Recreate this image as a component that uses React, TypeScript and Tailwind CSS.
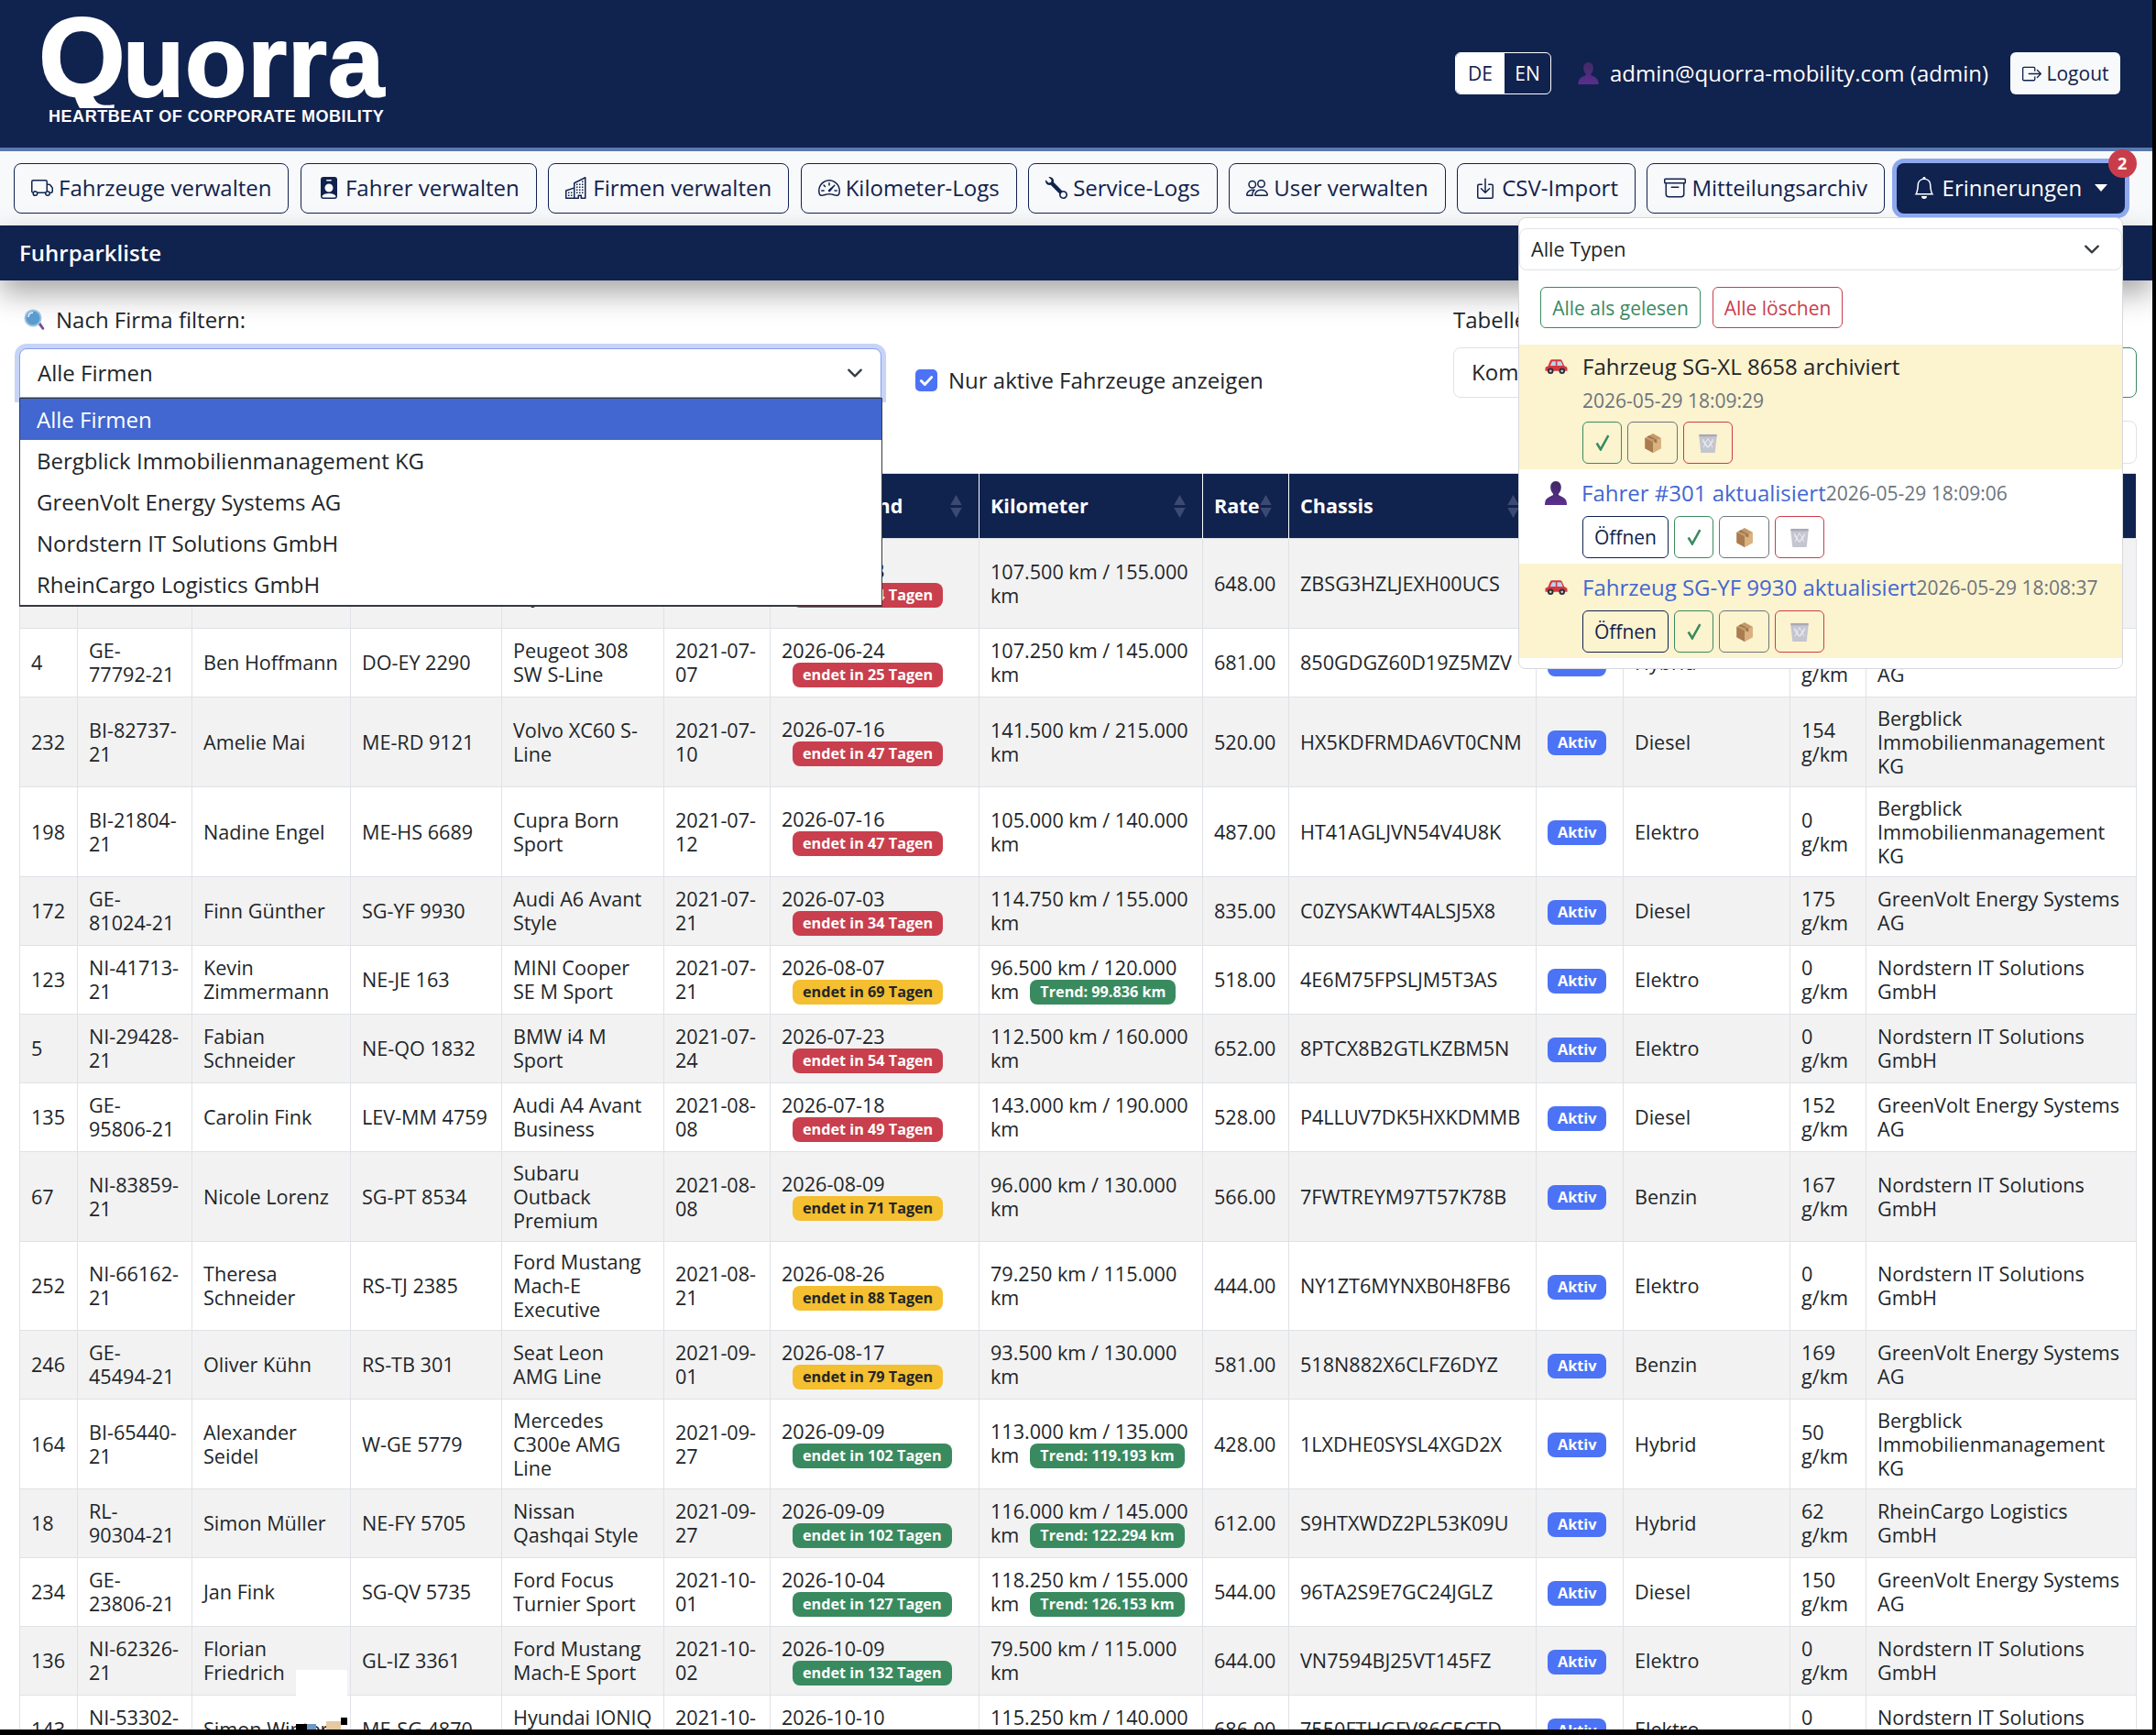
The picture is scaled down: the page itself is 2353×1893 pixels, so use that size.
import React from "react";
import {
  BsTruck,
  BsPersonBadgeFill,
  BsBuildings,
  BsSpeedometer2,
  BsWrench,
  BsPeople,
  BsBoxArrowInDown,
  BsArchive,
  BsBell,
  BsBoxArrowRight,
} from "react-icons/bs";

type Vehicle = {
  id: string;
  contract: string;
  driver: string;
  plate: string;
  model: string;
  start: string;
  end: string;
  days: number;
  km: string;
  trend?: string;
  rate: string;
  chassis: string;
  fuel: string;
  co2: string;
  company: string;
  h: string;
};

const BERG = "Bergblick Immobilienmanagement KG";
const GREEN = "GreenVolt Energy Systems AG";
const NORD = "Nordstern IT Solutions GmbH";
const RHEIN = "RheinCargo Logistics GmbH";

const vehicles: Vehicle[] = [
  { id: "61", contract: "BI-11802-21", driver: "Lena Vogel", plate: "ME-KA 4410", model: "Skoda Superb Style", start: "2021-07-03", end: "2026-06-23", days: 24, km: "107.500 km / 155.000 km", rate: "648.00", chassis: "ZBSG3HZLJEXH00UCS", fuel: "Diesel", co2: "160", company: BERG, h: "h-[98px]" },
  { id: "4", contract: "GE-77792-21", driver: "Ben Hoffmann", plate: "DO-EY 2290", model: "Peugeot 308 SW S-Line", start: "2021-07-07", end: "2026-06-24", days: 25, km: "107.250 km / 145.000 km", rate: "681.00", chassis: "850GDGZ60D19Z5MZV", fuel: "Hybrid", co2: "48", company: GREEN, h: "h-[75px]" },
  { id: "232", contract: "BI-82737-21", driver: "Amelie Mai", plate: "ME-RD 9121", model: "Volvo XC60 S-Line", start: "2021-07-10", end: "2026-07-16", days: 47, km: "141.500 km / 215.000 km", rate: "520.00", chassis: "HX5KDFRMDA6VT0CNM", fuel: "Diesel", co2: "154", company: BERG, h: "h-[98px]" },
  { id: "198", contract: "BI-21804-21", driver: "Nadine Engel", plate: "ME-HS 6689", model: "Cupra Born Sport", start: "2021-07-12", end: "2026-07-16", days: 47, km: "105.000 km / 140.000 km", rate: "487.00", chassis: "HT41AGLJVN54V4U8K", fuel: "Elektro", co2: "0", company: BERG, h: "h-[98px]" },
  { id: "172", contract: "GE-81024-21", driver: "Finn Günther", plate: "SG-YF 9930", model: "Audi A6 Avant Style", start: "2021-07-21", end: "2026-07-03", days: 34, km: "114.750 km / 155.000 km", rate: "835.00", chassis: "C0ZYSAKWT4ALSJ5X8", fuel: "Diesel", co2: "175", company: GREEN, h: "h-[75px]" },
  { id: "123", contract: "NI-41713-21", driver: "Kevin Zimmermann", plate: "NE-JE 163", model: "MINI Cooper SE M Sport", start: "2021-07-21", end: "2026-08-07", days: 69, km: "96.500 km / 120.000 km", trend: "99.836", rate: "518.00", chassis: "4E6M75FPSLJM5T3AS", fuel: "Elektro", co2: "0", company: NORD, h: "h-[75px]" },
  { id: "5", contract: "NI-29428-21", driver: "Fabian Schneider", plate: "NE-QO 1832", model: "BMW i4 M Sport", start: "2021-07-24", end: "2026-07-23", days: 54, km: "112.500 km / 160.000 km", rate: "652.00", chassis: "8PTCX8B2GTLKZBM5N", fuel: "Elektro", co2: "0", company: NORD, h: "h-[75px]" },
  { id: "135", contract: "GE-95806-21", driver: "Carolin Fink", plate: "LEV-MM 4759", model: "Audi A4 Avant Business", start: "2021-08-08", end: "2026-07-18", days: 49, km: "143.000 km / 190.000 km", rate: "528.00", chassis: "P4LLUV7DK5HXKDMMB", fuel: "Diesel", co2: "152", company: GREEN, h: "h-[75px]" },
  { id: "67", contract: "NI-83859-21", driver: "Nicole Lorenz", plate: "SG-PT 8534", model: "Subaru Outback Premium", start: "2021-08-08", end: "2026-08-09", days: 71, km: "96.000 km / 130.000 km", rate: "566.00", chassis: "7FWTREYM97T57K78B", fuel: "Benzin", co2: "167", company: NORD, h: "h-[98px]" },
  { id: "252", contract: "NI-66162-21", driver: "Theresa Schneider", plate: "RS-TJ 2385", model: "Ford Mustang Mach-E Executive", start: "2021-08-21", end: "2026-08-26", days: 88, km: "79.250 km / 115.000 km", rate: "444.00", chassis: "NY1ZT6MYNXB0H8FB6", fuel: "Elektro", co2: "0", company: NORD, h: "h-[97px]" },
  { id: "246", contract: "GE-45494-21", driver: "Oliver Kühn", plate: "RS-TB 301", model: "Seat Leon AMG Line", start: "2021-09-01", end: "2026-08-17", days: 79, km: "93.500 km / 130.000 km", rate: "581.00", chassis: "518N882X6CLFZ6DYZ", fuel: "Benzin", co2: "169", company: GREEN, h: "h-[75px]" },
  { id: "164", contract: "BI-65440-21", driver: "Alexander Seidel", plate: "W-GE 5779", model: "Mercedes C300e AMG Line", start: "2021-09-27", end: "2026-09-09", days: 102, km: "113.000 km / 135.000 km", trend: "119.193", rate: "428.00", chassis: "1LXDHE0SYSL4XGD2X", fuel: "Hybrid", co2: "50", company: BERG, h: "h-[98px]" },
  { id: "18", contract: "RL-\n90304-21", driver: "Simon Müller", plate: "NE-FY 5705", model: "Nissan Qashqai Style", start: "2021-09-27", end: "2026-09-09", days: 102, km: "116.000 km / 145.000 km", trend: "122.294", rate: "612.00", chassis: "S9HTXWDZ2PL53K09U", fuel: "Hybrid", co2: "62", company: RHEIN, h: "h-[75px]" },
  { id: "234", contract: "GE-23806-21", driver: "Jan Fink", plate: "SG-QV 5735", model: "Ford Focus Turnier Sport", start: "2021-10-01", end: "2026-10-04", days: 127, km: "118.250 km / 155.000 km", trend: "126.153", rate: "544.00", chassis: "96TA2S9E7GC24JGLZ", fuel: "Diesel", co2: "150", company: GREEN, h: "h-[75px]" },
  { id: "136", contract: "NI-62326-21", driver: "Florian Friedrich", plate: "GL-IZ 3361", model: "Ford Mustang Mach-E Sport", start: "2021-10-02", end: "2026-10-09", days: 132, km: "79.500 km / 115.000 km", rate: "644.00", chassis: "VN7594BJ25VT145FZ", fuel: "Elektro", co2: "0", company: NORD, h: "h-[75px]" },
  { id: "143", contract: "NI-53302-21", driver: "Simon Winter", plate: "ME-SG 4870", model: "Hyundai IONIQ 5", start: "2021-10-03", end: "2026-10-10", days: 133, km: "115.250 km / 140.000 km", rate: "686.00", chassis: "7550FTHGFV86C5CTD", fuel: "Elektro", co2: "0", company: NORD, h: "h-[75px]" },
];

const headers = ["ID", "Vertrag", "Fahrer", "Kennzeichen", "Modell", "Start", "Vertragsend", "Kilometer", "Rate", "Chassis", "Status", "Antrieb", "CO2", "Firma"];

const navItems = [
  { label: "Fahrzeuge verwalten", icon: BsTruck },
  { label: "Fahrer verwalten", icon: BsPersonBadgeFill },
  { label: "Firmen verwalten", icon: BsBuildings },
  { label: "Kilometer-Logs", icon: BsSpeedometer2 },
  { label: "Service-Logs", icon: BsWrench },
  { label: "User verwalten", icon: BsPeople },
  { label: "CSV-Import", icon: BsBoxArrowInDown },
  { label: "Mitteilungsarchiv", icon: BsArchive },
];

function CarEmoji() {
  return (
    <svg viewBox="0 0 26 18" className="h-[18px] w-[25px] shrink-0">
      <path d="M1 9.500 3.500 8.500 6 2.500C6.500 1.500 7.500 1 8.500 1h8.500c1.200 0 2 .5 2.600 1.500L22 8l2.800 1.500c.5.5.7 1 .7 2V14H.5v-2.500C.5 10.500.6 10 1 9.500Z" fill="#d8363f" />
      <path d="M8.300 3h4v5H6ZM14 3h3.600c.6 0 1 .3 1.200.8L20.400 8H14Z" fill="#b5d6ec" />
      <circle cx="6.500" cy="14" r="3.400" fill="#2c2f36" />
      <circle cx="19.500" cy="14" r="3.400" fill="#2c2f36" />
      <circle cx="6.500" cy="14" r="1.400" fill="#c9ced6" />
      <circle cx="19.500" cy="14" r="1.400" fill="#c9ced6" />
    </svg>
  );
}

function BustEmoji({ className }: { className: string }) {
  return (
    <svg viewBox="0 0 24 26" className={className}>
      <defs>
        <linearGradient id="bust" x1="0" y1="0" x2="0" y2="1">
          <stop offset="0" stopColor="#3f2a63" />
          <stop offset="1" stopColor="#5a2f8f" />
        </linearGradient>
      </defs>
      <path d="M12 0c3.800 0 5.800 3 5.800 6.400 0 2.800-1 5.400-2.600 7-.6.7-.4 1.600.4 2 3.400 1.600 6.800 3 7.800 6.200.5 1.700.6 3 .6 4.400H0c0-1.400.1-2.700.6-4.400 1-3.200 4.400-4.600 7.800-6.200.8-.4 1-1.300.4-2-1.600-1.600-2.600-4.200-2.600-7C6.200 3 8.200 0 12 0Z" fill="url(#bust)" />
    </svg>
  );
}

function BoxEmoji() {
  return (
    <svg viewBox="0 0 20 24" className="h-[23px] w-[20px]">
      <path d="M10 1 19 6v12l-9 5-9-5V6Z" fill="#c49a6c" />
      <path d="M10 11 19 6v12l-9 5Z" fill="#d9b27f" />
      <path d="M10 11 1 6v12l9 5Z" fill="#a97c50" />
      <path d="M5.500 3.500 14.500 8.500v3.500l-3-1V7.800L3 5Z" fill="#8a6139" opacity="0.7" />
    </svg>
  );
}

function TrashEmoji() {
  return (
    <svg viewBox="0 0 22 24" className="h-[23px] w-[22px]">
      <path d="M1 2h20v3l-2 18H3L1 5Z" fill="#c3c5cf" />
      <path d="M1 2h20v2.500H1Z" fill="#a7a9b6" />
      <path d="M5 7l3 5-2 5M11 7l-3 5 3 5 3-5ZM17 7l-3 5 2 5M4.500 9l6 8M17.500 9l-6 8" fill="none" stroke="#ececf2" strokeWidth="1" />
    </svg>
  );
}

function MagnifierEmoji() {
  return (
    <svg viewBox="0 0 24 24" className="h-[24px] w-[24px] shrink-0">
      <path d="M15.500 16.500 20 22.500c.8.900 2.800-.4 2.200-1.500l-4-6Z" fill="#7a4b8f" />
      <circle cx="10" cy="10" r="9.500" fill="#9cc2e0" />
      <circle cx="10" cy="10" r="7.500" fill="#5a9bd0" />
      <path d="M5 9c0-3 2-5 5-5" fill="none" stroke="#cfe6f7" strokeWidth="2" />
    </svg>
  );
}

function Chevron() {
  return (
    <svg viewBox="0 0 16 16" className="h-[18px] w-[18px]">
      <path d="M2 5l6 6 6-6" fill="none" stroke="#343a40" strokeWidth="2" strokeLinecap="round" strokeLinejoin="round" />
    </svg>
  );
}

function SortArrows() {
  return (
    <svg viewBox="0 0 12 24" className="mr-[6px] h-[25px] w-[13px] shrink-0">
      <path d="M6 0 12 10.500H0ZM6 24 0 13.500H12Z" fill="#3c4a73" />
    </svg>
  );
}

function NoticeButtons({ open }: { open?: boolean }) {
  return (
    <div className="flex gap-[6px]">
      {open && (
        <button className="h-[46px] w-[94px] rounded-[6px] border border-[#10224e] text-[21px] text-[#10224e]">Öffnen</button>
      )}
      <button className="flex h-[46px] w-[43px] items-center justify-center rounded-[6px] border border-[#3a8a5f]">
        <svg viewBox="0 0 15 17" className="h-[18px] w-[16px]">
          <path d="M1.500 9 5.500 15.500 13.500 1" fill="none" stroke="#3a8a5f" strokeWidth="2.400" />
        </svg>
      </button>
      <button className="flex h-[46px] w-[55px] items-center justify-center rounded-[6px] border border-[#6c757d]"><BoxEmoji /></button>
      <button className="flex h-[46px] w-[54px] items-center justify-center rounded-[6px] border border-[#c93d4b]"><TrashEmoji /></button>
    </div>
  );
}

function VehicleRow({ v, odd }: { v: Vehicle; odd: boolean }) {
  const badge = v.days < 60 ? "bg-[#c93f4d] text-white" : v.days < 100 ? "bg-[#f4bf30] text-[#212529]" : "bg-[#3a8a5f] text-white";
  const cell = "border border-[#dee2e6] px-3 align-middle";
  return (
    <tr className={`${v.h} ${odd ? "bg-[#f2f2f2]" : "bg-white"}`}>
      <td className={cell}>{v.id}</td>
      <td className={`${cell} whitespace-pre-line`}>{v.contract}</td>
      <td className={cell}>{v.driver}</td>
      <td className={cell}>{v.plate}</td>
      <td className={cell}>{v.model}</td>
      <td className={cell}>{v.start}</td>
      <td className={cell}>
        <div>{v.end}</div>
        <span className={`ml-3 inline-block h-[27px] rounded-[8px] px-[11px] align-top text-[16.200px] font-bold leading-[27px] ${badge}`}>endet in {v.days} Tagen</span>
      </td>
      <td className={cell}>
        {v.km}
        {v.trend && (
          <span className="ml-3 inline-block h-[27px] rounded-[8px] bg-[#3a8a5f] px-[11px] align-top text-[16.200px] font-bold leading-[27px] text-white">Trend: {v.trend} km</span>
        )}
      </td>
      <td className={cell}>{v.rate}</td>
      <td className={cell}>{v.chassis}</td>
      <td className={cell}>
        <span className="inline-block h-[27px] rounded-[8px] bg-[#4c73f5] px-[11px] text-[16.200px] font-bold leading-[27px] text-white">Aktiv</span>
      </td>
      <td className={cell}>{v.fuel}</td>
      <td className={cell}>{v.co2} g/km</td>
      <td className={cell}>{v.company}</td>
    </tr>
  );
}

export default function App() {
  return (
    <div className="relative h-[1893px] w-[2353px] overflow-hidden bg-black font-['Open_Sans',sans-serif] text-[21.600px] leading-[26px] text-[#212529]">
      <div className="h-[1887px] w-[2349px] overflow-hidden bg-white">
        <header className="flex h-[165px] items-center border-b-4 border-[#5b79ad] bg-[#10224e] pb-[1px] pl-[42px] pr-[35px]">
          <div className="mt-[13px] flex flex-col self-start font-['Liberation_Sans',sans-serif] font-bold text-white">
            <div className="flex items-baseline">
              <span className="text-[122px] leading-[100px] tracking-[-3px] [-webkit-text-stroke:2px_white] [clip-path:inset(-50px_-10px_-5px_-10px)]">Q</span>
              <span className="text-[110px] leading-[100px] tracking-[1px] [-webkit-text-stroke:2px_white]">uorra</span>
            </div>
            <div className="ml-[11px] text-[18px] leading-[20px] tracking-[0.55px]">HEARTBEAT OF CORPORATE MOBILITY</div>
          </div>
          <div className="ml-auto flex items-center">
            <div className="flex h-[46px] w-[105px] overflow-hidden rounded-[6px] border border-white text-[21px]">
              <div className="flex w-[53px] items-center justify-center bg-white text-[#10224e]">DE</div>
              <div className="flex flex-1 items-center justify-center text-white">EN</div>
            </div>
            <BustEmoji className="ml-[29px] h-[24px] w-[23px]" />
            <span className="ml-[12px] text-[24px] text-white">admin@quorra-mobility.com (admin)</span>
            <button className="ml-[24px] flex h-[46px] w-[120px] items-center justify-center gap-[6px] rounded-[6px] bg-[#f8f9fa] text-[21px] text-[#10224e]">
              <BsBoxArrowRight className="h-[21px] w-[21px]" />
              Logout
            </button>
          </div>
        </header>

        <nav className="flex h-[81px] items-center gap-[12.500px] bg-[#f8f9fa] pb-[1px] pl-[15px]">
          {navItems.map(({ label, icon: Icon }) => (
            <button key={label} className="flex h-[55px] items-center gap-[6px] rounded-[8px] border border-[#10224e] px-[18px] text-[24px] text-[#10224e]">
              <Icon className="h-[24px] w-[24px]" />
              {label}
            </button>
          ))}
          <button className="relative flex h-[55px] w-[249px] items-center gap-[8px] rounded-[8px] bg-[#10224e] px-[18px] text-[24px] text-white ring-[5px] ring-[#8ea8ef]">
            <BsBell className="h-[24px] w-[24px]" />
            Erinnerungen
            <span className="ml-[6px] h-0 w-0 border-x-[7px] border-t-[8px] border-x-transparent border-t-white" />
            <span className="absolute -right-[13px] -top-[15px] flex h-[31px] w-[31px] items-center justify-center rounded-full bg-[#c93d4b] text-[18px] font-bold text-white">2</span>
          </button>
        </nav>

        <div className="flex h-[60px] items-center bg-[#10224e] pl-[21px] text-[24px] font-semibold text-white shadow-[0_14px_32px_rgba(0,0,0,0.35)]">Fuhrparkliste</div>

        <div className="relative px-[21px]">
          <div className="flex h-[210px]">
            <div className="w-[941px] pt-[30px]">
              <div className="flex items-center gap-[11px] pl-[5px] text-[24px] leading-[26px]">
                <MagnifierEmoji />
                Nach Firma filtern:
              </div>
              <div className="relative mt-[18px] flex h-[54px] items-center justify-between rounded-t-[8px] border border-[#86a0ee] bg-white pl-[19px] pr-[19px] text-[24px] ring-[5px] ring-[#c7d4f8]">
                Alle Firmen
                <Chevron />
              </div>
            </div>
            <label className="ml-[37px] mt-[96px] flex h-[26px] items-center gap-[12px] whitespace-nowrap text-[24px]">
              <span className="flex h-[24px] w-[24px] items-center justify-center rounded-[5px] bg-[#4c73f5]">
                <svg viewBox="0 0 16 16" className="h-[18px] w-[18px]"><path d="M3 8.500l3.500 3.500L13 5" fill="none" stroke="#fff" strokeWidth="2.600" strokeLinecap="round" strokeLinejoin="round" /></svg>
              </span>
              Nur aktive Fahrzeuge anzeigen
            </label>
            <div className="absolute left-[1586px] top-[30px] w-[746px]">
              <div className="text-[24px]">Tabelle</div>
              <div className="mt-[17px] flex gap-[12px]">
                <div className="flex h-[55px] w-[300px] items-center rounded-[8px] border border-[#dee2e6] bg-white pb-[2px] pl-[19px] text-[24px]">Kompakt</div>
                <button className="ml-auto h-[55px] w-[200px] rounded-[8px] border border-[#3a8a5f]" />
              </div>
              <div className="ml-auto mt-[25px] h-[47px] w-[400px] rounded-[8px] border border-[#dee2e6]" />
            </div>
          </div>

          <table className="w-[2310px] table-fixed border-collapse">
            <colgroup>
              <col className="w-[63px]" />
              <col className="w-[125px]" />
              <col className="w-[173px]" />
              <col className="w-[165px]" />
              <col className="w-[177px]" />
              <col className="w-[116px]" />
              <col className="w-[228px]" />
              <col className="w-[244px]" />
              <col className="w-[94px]" />
              <col className="w-[270px]" />
              <col className="w-[95px]" />
              <col className="w-[182px]" />
              <col className="w-[83px]" />
              <col className="w-[295px]" />
            </colgroup>
            <thead>
              <tr className="h-[71px] bg-[#10224e] text-white">
                {headers.map((h) => (
                  <th key={h} className="border-x border-t border-x-white border-t-[#dee2e6] px-3 text-left font-bold">
                    <div className="flex items-center justify-between">
                      {h}
                      <SortArrows />
                    </div>
                  </th>
                ))}
              </tr>
            </thead>
            <tbody>
              {vehicles.map((v, i) => (
                <VehicleRow key={v.id} v={v} odd={i % 2 === 0} />
              ))}
            </tbody>
          </table>

          {/* open company dropdown */}
          <ul className="absolute left-[21px] top-[128px] w-[942px] border border-b-2 border-[#343a40] bg-white text-[24px]">
            {["Alle Firmen", "Bergblick Immobilienmanagement KG", "GreenVolt Energy Systems AG", "Nordstern IT Solutions GmbH", "RheinCargo Logistics GmbH"].map((c, i) => (
              <li key={c} className={`flex h-[45px] items-center px-[18px] ${i === 0 ? "bg-[#4267d0] text-white" : ""}`}>{c}</li>
            ))}
          </ul>
        </div>
      </div>

      {/* reminders dropdown */}
      <div className="absolute left-[1657px] top-[237px] h-[493px] w-[660px] rounded-[8px] border border-[#d5d8dc] bg-white">
        <div className="mt-[11px] flex h-[46px] items-center justify-between rounded-[8px] border border-[#dee2e6] pl-[12px] pr-[23px] text-[21.600px]">
          Alle Typen
          <Chevron />
        </div>
        <div className="mt-[18px] flex gap-[13px] pl-[23px]">
          <button className="h-[45px] w-[175px] rounded-[6px] border border-[#3a8a5f] text-[21px] text-[#3a8a5f]">Alle als gelesen</button>
          <button className="h-[45px] w-[142px] rounded-[6px] border border-[#c93d4b] text-[21px] text-[#c93d4b]">Alle löschen</button>
        </div>
        <div className="mt-[18px] h-[136px] bg-[#fcf3cf] pl-[28px]">
          <div className="flex items-center gap-[16px] pt-[11px]">
            <CarEmoji />
            <span className="text-[24px]">Fahrzeug SG-XL 8658 archiviert</span>
          </div>
          <div className="ml-[41px] mt-[11px] text-[21px] text-[#6c757d]">2026-05-29 18:09:29</div>
          <div className="ml-[41px] mt-[10px]"><NoticeButtons /></div>
        </div>
        <div className="h-[103px] bg-white pl-[28px]">
          <div className="flex items-center gap-[16px] pt-[13px]">
            <BustEmoji className="h-[26px] w-[24px]" />
            <span className="text-[24px] text-[#4267d0]">Fahrer #301 aktualisiert</span>
            <span className="-ml-[16px] text-[21px] text-[#6c757d]">2026-05-29 18:09:06</span>
          </div>
          <div className="ml-[41px] mt-[12px]"><NoticeButtons open /></div>
        </div>
        <div className="h-[103px] bg-[#fcf3cf] pl-[28px]">
          <div className="flex items-center gap-[16px] pt-[13px]">
            <CarEmoji />
            <span className="text-[24px] text-[#4267d0]">Fahrzeug SG-YF 9930 aktualisiert</span>
            <span className="-ml-[16px] text-[21px] text-[#6c757d]">2026-05-29 18:08:37</span>
          </div>
          <div className="ml-[41px] mt-[12px]"><NoticeButtons open /></div>
        </div>
      </div>

      {/* cursor artefact in the capture */}
      <div className="absolute left-[323px] top-[1822px] h-[58px] w-[56px] bg-white" />
      <div className="absolute left-[323px] top-[1881px] h-[6px] w-[12px] bg-black" />
      <div className="absolute left-[335px] top-[1881px] h-[6px] w-[10px] bg-[#6f97c4]" />
      <div className="absolute left-[356px] top-[1878px] h-[9px] w-[16px] bg-[#e7c9a0]" />
      <div className="absolute left-[372px] top-[1874px] h-[8px] w-[7px] bg-black" />
    </div>
  );
}
